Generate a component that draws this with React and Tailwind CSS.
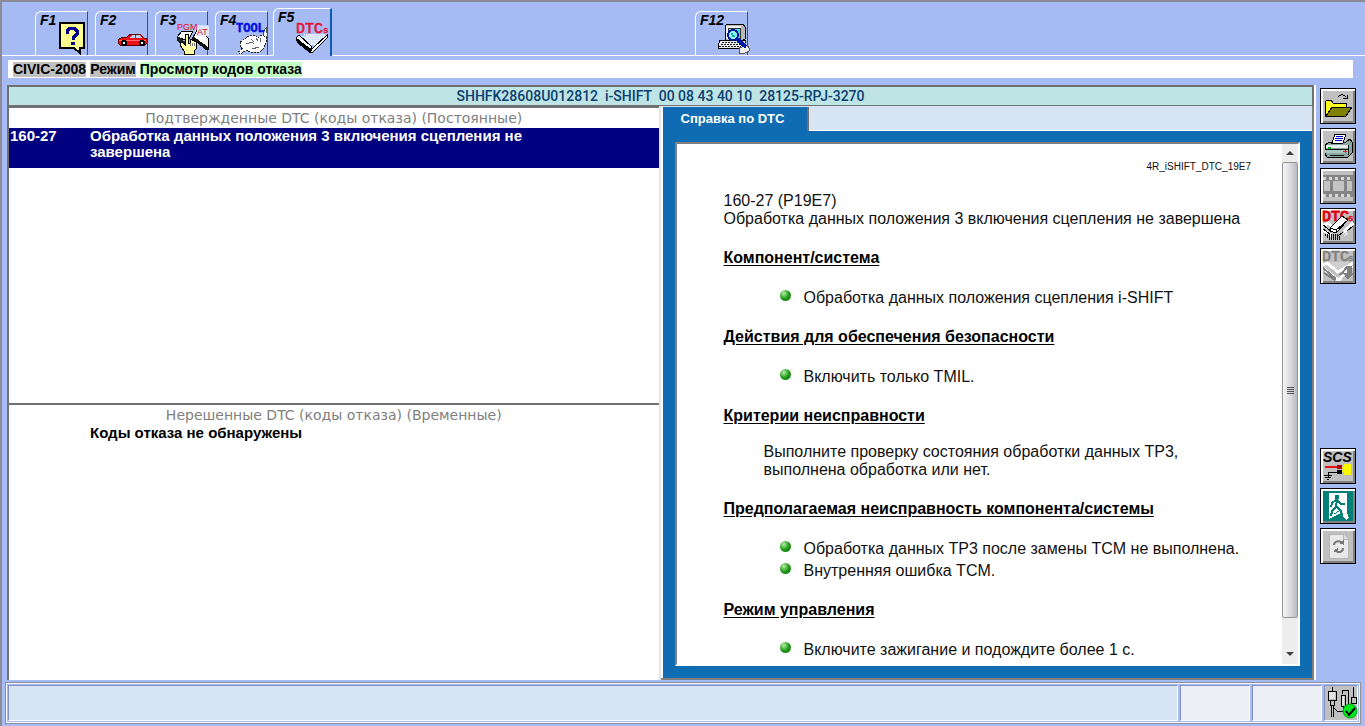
import React, { useState } from 'react';

const Icon = ({ children, className = '' }) => (
  <svg viewBox="0 0 32 32" shapeRendering="crispEdges" aria-hidden="true" className={`w-8 h-8 shrink-0 overflow-visible ${className}`}>
    {children}
  </svg>
);

const HelpIcon = () => (
  <Icon>
    <path d="M5 3h23v24h-4v5l-7-5H5z" fill="#6f6f6f" />
    <path d="M3 1h24v25h-4v5l-6-5H3z" fill="#ffff90" stroke="#000" strokeWidth="2" />
    <path d="M10 12V9l3-3h4l3 3v3l-4 4v2" fill="none" stroke="#00008b" strokeWidth="3" />
    <path d="M14 20h4v3h-4z" fill="#00008b" />
  </Icon>
);

const CarIcon = () => (
  <Icon>
    <path d="M1 18l3-2 6-1 4-3h9l4 4 3 1v4l-2 2H3l-2-2z" fill="#ee1018" stroke="#600" strokeWidth="1" />
    <path d="M12 16l3-3h3v3zM19 13h4l2 3h-6z" fill="#b9d0f4" />
    <path d="M2 18h27" stroke="#ff6a6a" />
    <circle cx="7" cy="21" r="3" fill="#000" />
    <circle cx="25" cy="21" r="3" fill="#000" />
    <path d="M6 20h2v2H6zM24 20h2v2h-2z" fill="#fff" />
  </Icon>
);

const UpdateIcon = () => (
  <Icon>
    <path d="M18 3h13v18H18z" fill="#cddcf6" />
    <path d="M16 15l5-8 10 9v11z" fill="#fff" stroke="#000" />
    <path d="M20 4h12v10H20z" fill="#dfe8fa" />
    <path d="M14 16l2-2 15 11v3h-2z" fill="#111" />
    <path d="M0 15l5-6h11l-5 10z" fill="#fff" stroke="#000" />
    <path d="M0 14l10 7v5L0 19z" fill="#222" />
    <text x="0" y="8" fontSize="9" fill="#e01020" fontFamily="Liberation Sans, sans-serif">PGM</text>
    <text x="20" y="13" fontSize="9" fill="#e01020" fontFamily="Liberation Sans, sans-serif">AT</text>
    <path d="M8 12h3v9h2v-4h2v1h2v1h2v8l-2 2v3H7v-3l-4-6v-3h2l3 3z" fill="#ffffa8" stroke="#000" />
    <path d="M13 21v3M15 21v3M17 21v3" stroke="#777" />
  </Icon>
);

const ToolIcon = () => (
  <Icon>
    <path d="M29 6v4h2l-1 4-5 5-3-2 4-4v-3z" fill="#f4f4f4" stroke="#555" />
    <path d="M3 20l5-3 4-3 4-1 3 1 2 2 4-3 4 2v6l-3 6-3 3H13l-3-2-7 4-2-2 5-3-3-2z" fill="#fff" />
    <path d="M3 20l5-3 4-3 4-1 3 1 2 2 4-3 4 2v6l-3 6-3 3H13l-3-2-7 4-2-2 5-3-3-2z" fill="none" stroke="#222" strokeDasharray="2 1" />
    <path d="M9 22l6-2 2 2M14 17l3 3M19 16l2 3M24 16l-1 4M15 27l7-2" fill="none" stroke="#666" />
    <text x="-1" y="10" fontSize="12" fontWeight="bold" fill="#0010e0" stroke="#0010e0" strokeWidth=".5" fontFamily="Liberation Mono, monospace">TOOL</text>
  </Icon>
);

const DtcIcon = () => (
  <Icon>
    <path d="M13 12h16l2 3-9 9-8-1-10-6z" fill="#d6e2fa" />
    <path d="M8 12h12M5 14h25M7 16h23M9 18h19M11 20h15M13 22h11" stroke="#fff" strokeDasharray="1 1" />
    <path d="M17 26L31 13v3L17 30h-3z" fill="#fff" stroke="#000" />
    <path d="M0 16l3-3 13 12-2 3z" fill="#fff" stroke="#000" />
    <path d="M0 16l14 10v5L1 21z" fill="#000" />
    <text x="0" y="11" fontSize="15" fill="#e81030" stroke="#e81030" strokeWidth=".6" fontFamily="Liberation Mono, monospace">DTC</text>
    <text x="27" y="11" fontSize="9" fill="#e81030" stroke="#e81030" strokeWidth=".5" fontFamily="Liberation Mono, monospace">s</text>
  </Icon>
);

const ComputerIcon = () => (
  <Icon>
    <path d="M9 3l2-1h15l2 3v12l-3 2H8V5z" fill="#b8b8b8" stroke="#000" />
    <path d="M9 4h15v13H9z" fill="#f0f0f0" />
    <path d="M11 6h12v10H11z" fill="#40e0e0" stroke="#333" />
    <path d="M3 18h26l-3 8H1v-2z" fill="#e8e8e8" stroke="#000" />
    <path d="M5 20h20M4 22h21M2 24h22" stroke="#222" strokeDasharray="2 1" />
    <path d="M22 26l8-3 2 3v3l-4 2h-6z" fill="#f0f0f0" stroke="#555" />
    <circle cx="16" cy="13" r="5" fill="#90f0f0" stroke="#0018a0" strokeWidth="2" />
    <path d="M14 11h2v2h2v2h-3z" fill="#20b0b0" />
    <path d="M20 17l9 8" stroke="#0018a0" strokeWidth="4" />
  </Icon>
);

const OpenIcon = () => (
  <Icon>
    <path d="M3 12l2-2h4l2 3h13v4H11L5 26H3z" fill="#ffff20" stroke="#000" />
    <path d="M10 17h20l-6 9H4z" fill="#808000" stroke="#000" />
    <path d="M16 7c2-3 6-3 8 0M21 8h4V5" fill="none" stroke="#000" />
  </Icon>
);

const PrinterIcon = () => (
  <Icon>
    <path d="M3 15l5-3h16l4-3 2 3v11l-4 4H5l-2-3z" fill="#8aa8a0" stroke="#000" />
    <path d="M10 13l3-9h11l-3 9z" fill="#fff" stroke="#000" />
    <path d="M14 6h7M13 8h8M13 10h7" stroke="#0000d0" />
    <path d="M4 15h22v3H4z" fill="#e4eeee" />
    <path d="M3 19h23v4H3z" fill="#a9c8bf" />
    <path d="M6 17h3v2H6z" fill="#00b020" />
    <path d="M21 21h4M23 19v4" stroke="#e02020" />
    <path d="M8 25h14M26 15v10M3 19h23" stroke="#111" />
  </Icon>
);

const FilmIcon = () => (
  <Icon>
    <path d="M1 5h30v22H1z" fill="#858585" />
    <path d="M2 11h6v10H2zM11 11h11v10H11zM25 11h5v10h-5z" fill="#c3c3c3" />
    <path d="M1 8h30M1 25h30" stroke="#d6d6d6" strokeWidth="3" strokeDasharray="3 3" />
  </Icon>
);

const ClearDtcIcon = () => (
  <Icon>
    <text x="0" y="11" fontSize="15" fill="#e00010" stroke="#e00010" strokeWidth="1" fontFamily="Liberation Mono, monospace">DTC</text>
    <text x="26" y="11" fontSize="9" fill="#e00010" stroke="#e00010" strokeWidth=".5" fontFamily="Liberation Mono, monospace">s</text>
    <path d="M1 16l5-3 6 5M1 20l9 6M31 13l-9 9" fill="none" stroke="#fff" strokeWidth="3" />
    <path d="M1 15l8 6M1 19l7 5M16 26l5-4M25 21l6-5" stroke="#000" />
    <path d="M8 18L20 6l6 4-12 13-6-2z" fill="#fff" stroke="#000" />
    <path d="M8 18l6 2 12-10M14 20v3" fill="none" stroke="#000" />
    <path d="M3 25h13M5 27h13M7 29h12" stroke="#111" strokeWidth="2" strokeDasharray="1 1" />
    <path d="M21 24l4-4M22 26l4-3" stroke="#fff" />
  </Icon>
);

const SaveDtcIcon = () => (
  <Icon>
    <text x="0" y="11" fontSize="15" fill="#808080" stroke="#808080" strokeWidth=".7" fontFamily="Liberation Mono, monospace">DTC</text>
    <text x="26" y="11" fontSize="9" fill="#808080" stroke="#808080" strokeWidth=".5" fontFamily="Liberation Mono, monospace">s</text>
    <path d="M1 15l4-3h22l-9 11z" fill="#d0d0d0" />
    <path d="M1 15l4-2 11 9 15-9M1 18l14 11h3l12-13" fill="none" stroke="#fff" strokeWidth="3" />
    <path d="M1 18l13 11M2 23l11 7M18 25l8-9" fill="none" stroke="#808080" strokeWidth="2" />
    <path d="M25 16h5v7h2l-6 7-5-7h4z" fill="#808080" />
  </Icon>
);

const ScsIcon = () => (
  <Icon>
    <text x="1" y="12" fontSize="14" fontWeight="bold" fontStyle="italic" fontFamily="Liberation Sans, sans-serif">SCS</text>
    <path d="M3 17h16" stroke="#e81010" strokeWidth="2" />
    <path d="M15 15h5v4h-5z" fill="#b00000" />
    <path d="M6 27v-5h10M2 25h8M3 27h6M5 29h2" fill="none" stroke="#000" />
    <path d="M15 20h5v4h-5z" fill="#000" />
    <path d="M22 14h7v11h-7v-3h-2v-2h2v-1h-2v-2h2z" fill="#f8f800" />
  </Icon>
);

const ExitIcon = () => (
  <Icon>
    <path d="M1 1h30v30H1z" fill="#008078" />
    <path d="M7 3h18v20l2 5-3 2-5-7-12 6z" fill="#fff" />
    <path d="M13 5h4v4h-4z" fill="#008078" />
    <path d="M15 9l-1 8M14 10l-4 3-1 4M15 10l4 4h4M14 17l-4 4-1 5M15 17l4 4 1 4" fill="none" stroke="#008078" strokeWidth="2" />
    <path d="M12 24l5-3" stroke="#008078" />
  </Icon>
);

const RefreshIcon = () => (
  <Icon>
    <path d="M7 4h14l5 4v20H7z" fill="#e8e8e8" stroke="#b5b5b5" />
    <path d="M21 4v5h5" fill="#ddd" stroke="#b5b5b5" />
    <path d="M12 15c0-3 4-5 7-3M21 18c0 4-4 5-7 3" fill="none" stroke="#777" strokeWidth="2" shapeRendering="auto" />
    <path d="M17 13l5-3v5zM16 18v5l-5-2z" fill="#777" />
  </Icon>
);

const CableIcon = () => (
  <Icon>
    <path d="M7 0v4M3 4h8v9H3zM5 13h4v5H5zM6 18v12M8 18v12M17 7V3h6v15M16 8h4v11h-4zM18 19v5h-6l-3-3M28 0v10M26 10h5v6h-5z" fill="none" stroke="#000" />
    <path d="M4 5h6v7H4zM17 9h2v9h-2z" fill="#e3e3e3" />
    <circle cx="25" cy="24" r="7" fill="#00e820" stroke="#00a010" shapeRendering="auto" />
    <path d="M21 24l3 4 6-7" fill="none" stroke="#000" strokeWidth="2" shapeRendering="auto" />
  </Icon>
);

const tabs = [
  { key: 'F1', icon: HelpIcon },
  { key: 'F2', icon: CarIcon },
  { key: 'F3', icon: UpdateIcon },
  { key: 'F4', icon: ToolIcon },
  { key: 'F5', icon: DtcIcon },
];

const actions = [
  { name: 'open', icon: OpenIcon },
  { name: 'print', icon: PrinterIcon },
  { name: 'record', icon: FilmIcon, disabled: true },
  { name: 'clear', icon: ClearDtcIcon },
  { name: 'save', icon: SaveDtcIcon, disabled: true },
];

const systemActions = [
  { name: 'scs', icon: ScsIcon },
  { name: 'exit', icon: ExitIcon },
  { name: 'refresh', icon: RefreshIcon, disabled: true },
];

const helpSections = [
  { title: 'Компонент/система', items: ['Обработка данных положения сцепления i-SHIFT'] },
  { title: 'Действия для обеспечения безопасности', items: ['Включить только TMIL.'] },
  { title: 'Критерии неисправности', text: 'Выполните проверку состояния обработки данных TP3, выполнена обработка или нет.' },
  {
    title: 'Предполагаемая неисправность компонента/системы',
    items: ['Обработка данных TP3 после замены TCM не выполнена.', 'Внутренняя ошибка TCM.'],
  },
  { title: 'Режим управления', items: ['Включите зажигание и подождите более 1 с.'] },
];

const FunctionTab = ({ label, icon: TabIcon, active, onClick }) => (
  <button
    onClick={onClick}
    className={`grid items-start justify-items-start rounded-tl-md border-t border-l border-white bg-[#a6baf4] ${
      active
        ? 'w-[59px] h-12 -ml-0.5 -mb-px border-r-2 border-r-[#0c5cac]'
        : 'w-[53px] h-11 border-r border-r-[#0c5cac]'
    }`}
  >
    <span className="col-start-1 row-start-1 pl-1 text-sm leading-4 font-bold italic text-black">{label}</span>
    <span className={`col-start-1 row-start-1 ${active ? 'pl-[22px] pt-[13px]' : 'pl-[21px] pt-[10px]'}`}>
      <TabIcon />
    </span>
  </button>
);

const ActionButton = ({ action }) => {
  const ActionIcon = action.icon;
  return (
    <button
      aria-label={action.name}
      disabled={action.disabled}
      className="flex items-center justify-center w-9 h-9 border border-black bg-[#c0c0c0] shadow-[inset_2px_2px_0_#fff,inset_-2px_-2px_0_#808080]"
    >
      <ActionIcon />
    </button>
  );
};

const DtcPanel = ({ title, children, className }) => (
  <section className={`min-h-0 bg-white border-l-2 border-t-2 border-[#707070] ${className}`}>
    <h2 className="text-center text-sm leading-5 text-[#808080] font-[DejaVu_Sans,sans-serif]">{title}</h2>
    <table className="w-full border-collapse text-[15px] leading-4 font-bold">
      <tbody>{children}</tbody>
    </table>
  </section>
);

const HelpDocument = () => (
  <article className="flex-1 min-w-0 overflow-hidden bg-white pl-[47px] pr-[31px] pt-4 text-base leading-[18px] text-[#111] font-[Liberation_Sans,Arial,sans-serif]">
    <p className="mb-[18px] text-right text-[10px] leading-[14px]">4R_iSHIFT_DTC_19E7</p>
    <p>160-27 (P19E7)</p>
    <p>Обработка данных положения 3 включения сцепления не завершена</p>
    {helpSections.map((section) => (
      <section key={section.title} className="pt-[21px]">
        <h3 className="font-bold underline underline-offset-2 text-black">{section.title}</h3>
        {section.text && <p className="mt-[18px] ml-10 max-w-[420px]">{section.text}</p>}
        {section.items && (
          <ul className="mt-[22px] flex flex-col gap-1">
            {section.items.map((item) => (
              <li key={item} className="flex items-start pl-14">
                <span className="mt-px mr-[13px] w-[11px] h-[11px] shrink-0 rounded-full bg-radial-[at_35%_30%] from-[#b8f0a8] via-[#209a18] to-[#087808]" />
                <span>{item}</span>
              </li>
            ))}
          </ul>
        )}
      </section>
    ))}
  </article>
);

const ScrollBar = () => (
  <div aria-hidden="true" className="flex flex-col w-4 bg-[#ededed]">
    <div className="flex h-[18px] items-center justify-center">
      <div className="border-x-4 border-b-4 border-x-transparent border-b-[#404040]" />
    </div>
    <div className="flex flex-1 items-center justify-center rounded-xs border border-[#969696] bg-linear-to-r from-[#f5f5f5] via-[#dcdce0] to-[#b8b8c0]">
      <div className="flex flex-col gap-px">
        <div className="w-[7px] h-px bg-[#505050]" />
        <div className="w-[7px] h-px bg-[#505050]" />
        <div className="w-[7px] h-px bg-[#505050]" />
        <div className="w-[7px] h-px bg-[#505050]" />
      </div>
    </div>
    <div className="flex h-[46px] items-end justify-center pb-2">
      <div className="border-x-4 border-t-4 border-x-transparent border-t-[#404040]" />
    </div>
  </div>
);

const App = () => {
  const [activeTab, setActiveTab] = useState('F5');

  return (
    <div className="flex flex-col h-screen overflow-hidden border-t-2 border-l-2 border-[#8c8c98] bg-[#a6baf4] text-black font-[Liberation_Sans,Arial,sans-serif]">
      <nav className="flex items-end h-[54px] pl-[33px] border-b border-white">
        <div className="flex items-end gap-[7px]">
          {tabs.map((tab) => (
            <FunctionTab
              key={tab.key}
              label={tab.key}
              icon={tab.icon}
              active={activeTab === tab.key}
              onClick={() => setActiveTab(tab.key)}
            />
          ))}
        </div>
        <div className="ml-[363px]">
          <FunctionTab label="F12" icon={ComputerIcon} active={activeTab === 'F12'} onClick={() => setActiveTab('F12')} />
        </div>
      </nav>

      <div className="flex items-center gap-1 h-[18px] mt-1 ml-[6px] mr-3 pl-[5px] bg-white text-sm leading-[15px] font-bold">
        <span className="bg-[#c0c0c0]">CIVIC-2008</span>
        <span className="bg-[#c0c0c0]">Режим</span>
        <span className="bg-[#c0ffc0]">Просмотр кодов отказа</span>
      </div>

      <div className="flex flex-1 min-h-0 mt-[7px] ml-[5px]">
        <main className="flex flex-1 min-w-0 flex-col border-r-2 border-r-white">
          <div className="h-[21px] border-2 border-b border-[#707070] bg-[#bfe4e6] text-center text-sm leading-[18px] font-medium text-[#0b4070] whitespace-pre font-[Roboto,sans-serif]">
            SHHFK28608U012812  i-SHIFT  00 08 43 40 10  28125-RPJ-3270
          </div>
          <div className="grid flex-1 min-h-0 grid-cols-2">
            <div className="flex flex-col min-h-0 min-w-0 border-r-2 border-[#e4e4ec]">
              <DtcPanel title="Подтвержденные DTC (коды отказа) (Постоянные)" className="flex-[297]">
                <tr className="h-10 bg-[#000080] text-white">
                  <td className="w-[81px] pl-px align-top">160-27</td>
                  <td className="pr-[120px] align-top">Обработка данных положения 3 включения сцепления не завершена</td>
                </tr>
              </DtcPanel>
              <DtcPanel title="Нерешенные DTC (коды отказа) (Временные)" className="flex-[276]">
                <tr>
                  <td className="w-[81px]" />
                  <td>Коды отказа не обнаружены</td>
                </tr>
              </DtcPanel>
            </div>

            <div className="flex flex-col min-h-0 min-w-0 pt-px border-r-2 border-b-2 border-[#808080] bg-[#d6e4f4]">
              <div className="flex h-6 items-end border-l-2 border-white">
                <button className="h-6 w-[146px] pr-1 border-r-2 border-[#707070] bg-[#0f6cb2] text-[13px] leading-5 font-bold text-white">
                  Справка по DTC
                </button>
                <div className="flex-1 h-px bg-white" />
              </div>
              <div className="flex flex-1 min-h-0 bg-[#0f6cb2] border-l-2 border-white px-3 pt-[11px] pb-3">
                <div className="flex flex-1 min-w-0 border-2 border-[#808080] border-r-white border-b-white">
                  <HelpDocument />
                  <ScrollBar />
                </div>
              </div>
            </div>
          </div>
        </main>

        <aside className="flex flex-col w-[49px] shrink-0 gap-1 pt-[3px] pl-1">
          {actions.map((action) => (
            <ActionButton key={action.name} action={action} />
          ))}
          <div className="mt-40 flex flex-col gap-1">
            {systemActions.map((action) => (
              <ActionButton key={action.name} action={action} />
            ))}
          </div>
        </aside>
      </div>

      <footer className="flex gap-[2px] h-10 mt-[3px] mb-[3px] ml-1 mr-[5px] p-px border border-[#f4f6fc] outline outline-[#909098]">
        <div className="flex-1 border border-[#8492c0] border-r-white border-b-white bg-[#d6e4f4]" />
        <div className="w-[70px] border border-[#8492c0] border-r-white border-b-white bg-[#ebeff4]" />
        <div className="w-[70px] border border-[#8492c0] border-r-white border-b-white bg-[#ebeff4]" />
        <div className="flex items-center w-[34px] border border-[#8492c0] border-r-white border-b-white bg-[#c0c0c0]">
          <CableIcon />
        </div>
      </footer>
    </div>
  );
};

export default App;
